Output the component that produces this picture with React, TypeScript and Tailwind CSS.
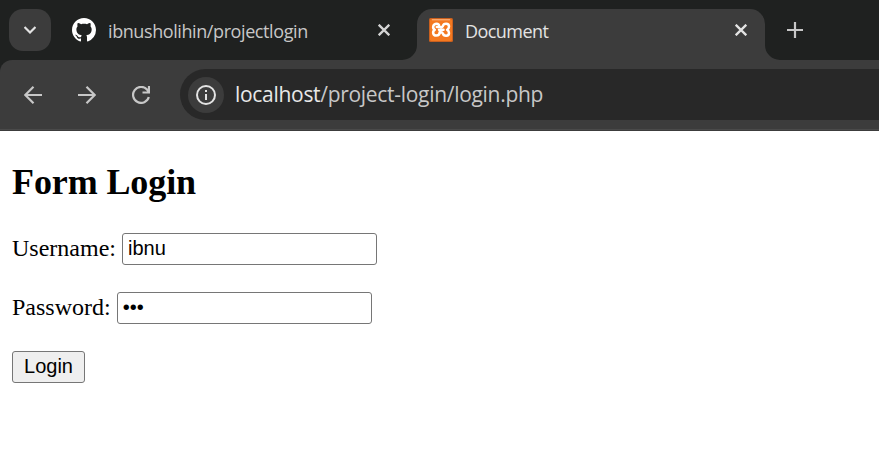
import React from 'react';

const Github = () => (
  <svg className="h-6 w-6 shrink-0" viewBox="0 0 16 16" fill="#fff">
    <path d="M8 0C3.58 0 0 3.58 0 8c0 3.54 2.29 6.53 5.47 7.59.4.07.55-.17.55-.38 0-.19-.01-.82-.01-1.49-2.01.37-2.53-.49-2.69-.94-.09-.23-.48-.94-.82-1.13-.28-.15-.68-.52-.01-.53.63-.01 1.08.58 1.23.82.72 1.21 1.87.87 2.33.66.07-.52.28-.87.51-1.07-1.78-.2-3.64-.89-3.64-3.95 0-.87.31-1.59.82-2.15-.08-.2-.36-1.02.08-2.12 0 0 .67-.21 2.2.82.64-.18 1.32-.27 2-.27s1.36.09 2 .27c1.53-1.04 2.2-.82 2.2-.82.44 1.1.16 1.92.08 2.12.51.56.82 1.27.82 2.15 0 3.07-1.87 3.75-3.65 3.95.29.25.54.73.54 1.48 0 1.07-.01 1.93-.01 2.2 0 .21.15.46.55.38A8.01 8.01 0 0 0 16 8c0-4.42-3.58-8-8-8Z" />
  </svg>
);

const Xampp = () => (
  <svg className="h-6 w-6 shrink-0" viewBox="0 0 24 24" fill="none">
    <rect width="24" height="24" rx="1.5" fill="#c9601f" />
    <rect x="1" y="1" width="22" height="22" rx="1.5" fill="#f47920" />
    <path d="M3 1.800h18" stroke="#fbb98a" strokeWidth="1" />
    <path d="M7.800 9C10.800 9.500 11 5.800 7.700 5.800 3.600 5.800 3.200 10.500 5.800 11.800 3.200 13.200 3.600 17.600 7.300 17.600c2.900 0 3.500-1.600 3.500-3.800M10.300 8.300c.6 1.300 2.900 1.300 3.500 0C14.600 5 20 5 20 8.600c0 1.500-.7 2.600-1.900 3.200 1.200.6 1.900 1.700 1.900 3.100 0 3.600-5.300 3.600-6.200.5-.6-1.400-2.700-1.400-3.300 0M10 11.800h4.500" stroke="#fff" strokeWidth="2.500" strokeLinecap="round" strokeLinejoin="round" />
  </svg>
);

const Close = ({ color }: { color: string }) => (
  <svg className="h-3 w-3 shrink-0" viewBox="0 0 12 12" stroke={color} strokeWidth="2.3">
    <path d="m.7.7 10.600 10.600M11.300.7.7 11.300" />
  </svg>
);

export default function App() {
  return (
    <div className="h-[463px] w-[879px] overflow-hidden bg-white">
      <header className="h-[131px] bg-[#1f2120] font-['Open_Sans',sans-serif]">
        <div className="flex h-[60px] pt-[9px]">
          <button className="ml-[9px] flex h-[42px] w-[42px] items-center justify-center rounded-[14px] bg-[#3c3c3c]">
            <svg className="h-3 w-3" viewBox="0 0 12 12" fill="none" stroke="#e3e3e3" strokeWidth="2.2">
              <path d="m.5 3 5.500 5.500L11.500 3" />
            </svg>
          </button>
          <div className="flex h-[42px] w-[366px] items-center pr-[27px] pl-[21px]">
            <Github />
            <span className="ml-3 grow pt-[2px] text-[18px] tracking-[-0.41px] whitespace-nowrap text-[#c7c7c7]">ibnusholihin/projectlogin</span>
            <Close color="#d4d4d4" />
          </div>
          <div className="relative flex h-[51px] w-[348px] items-center rounded-t-[15px] bg-[#3c3c3c] pr-[18px] pb-[9px] pl-3">
            <svg className="absolute bottom-0 -left-[15px] h-[15px] w-[15px]" viewBox="0 0 15 15" fill="#3c3c3c">
              <path d="M15 0v15H0A15 15 0 0 0 15 0Z" />
            </svg>
            <Xampp />
            <span className="ml-3 grow pt-[2px] text-[18px] tracking-[-0.55px] whitespace-nowrap text-[#e3e3e3]">Document</span>
            <Close color="#e3e3e3" />
            <svg className="absolute -right-[15px] bottom-0 h-[15px] w-[15px]" viewBox="0 0 15 15" fill="#3c3c3c">
              <path d="M0 0v15h15A15 15 0 0 1 0 0Z" />
            </svg>
          </div>
          <svg className="mt-[13px] ml-[22px] h-4 w-4" viewBox="0 0 16 16" stroke="#c7c7c7" strokeWidth="2.2">
            <path d="M8 0v16M0 8h16" />
          </svg>
        </div>
        <div className="flex h-[71px] items-start rounded-tl-[12px] border-b border-[#3c3c3c] bg-[#3c3c3c] pt-[9px] shadow-[inset_0_-1px_0_#4a4a4a]">
          <div className="flex h-[52px] w-[180px] items-center gap-9 pl-6">
            <svg className="h-[18px] w-[18px]" viewBox="0 0 18 18" fill="none" stroke="#c7c7c7" strokeWidth="2.2">
              <path d="M18 9H1.500M9.500.8 1.300 9l8.200 8.200" />
            </svg>
            <svg className="h-[18px] w-[18px]" viewBox="0 0 18 18" fill="none" stroke="#c7c7c7" strokeWidth="2.2">
              <path d="M0 9h16.500M8.500.8 16.700 9l-8.200 8.200" />
            </svg>
            <svg className="h-[18px] w-[18px]" viewBox="0 0 18 18" fill="none" stroke="#c7c7c7" strokeWidth="2.2">
              <path d="M16.800 11A8 8 0 1 1 15 3.500L17 6M17 0v6.500h-6.500" />
            </svg>
          </div>
          <div className="flex h-[51px] grow items-center rounded-l-full bg-[#282828] pl-2">
            <div className="flex h-9 w-9 items-center justify-center rounded-full bg-[#3c3c3c]">
              <svg className="h-5 w-5" viewBox="0 0 20 20" fill="none" stroke="#e3e3e3" strokeWidth="2">
                <circle cx="10" cy="10" r="9" />
                <path d="M10 9v6M10 5v2" />
              </svg>
            </div>
            <span className="ml-[11px] text-[21px] tracking-[-0.3px] whitespace-nowrap text-[#c7c7c7]">
              <span className="text-[#e8e8e8]">localhost</span>/project-login/login.php
            </span>
          </div>
        </div>
      </header>
      <main className="pl-3 pt-[30px] font-['Liberation_Serif',serif] text-[24px] leading-[27px] text-black">
        <h2 className="text-[36px] leading-[42px] font-bold tracking-[-0.1px]">Form Login</h2>
        <form className="mt-[30px]">
          <div className="flex h-8 items-center">
            <label htmlFor="username" className="pb-[2px]">Username:</label>
            <input id="username" defaultValue="ibnu" className="ml-1.5 h-8 w-[255px] rounded-[3px] border border-[#767676] bg-white px-[5px] pb-[2px] font-['Liberation_Sans',sans-serif] text-[20px] outline-none" />
          </div>
          <div className="mt-[27px] flex h-8 items-center">
            <label htmlFor="password" className="pb-[2px]">Password:</label>
            <input id="password" type="password" defaultValue="123" className="ml-1.5 h-8 w-[255px] rounded-[3px] border border-[#767676] bg-white px-[5px] pb-[2px] font-['Liberation_Sans',sans-serif] text-[20px] outline-none" />
          </div>
          <button type="button" className="mt-[27px] flex h-8 w-[73px] items-center justify-center rounded-[3px] border border-[#767676] bg-[#efefef] pb-[2px] font-['Liberation_Sans',sans-serif] text-[20px]">Login</button>
        </form>
      </main>
    </div>
  );
}
